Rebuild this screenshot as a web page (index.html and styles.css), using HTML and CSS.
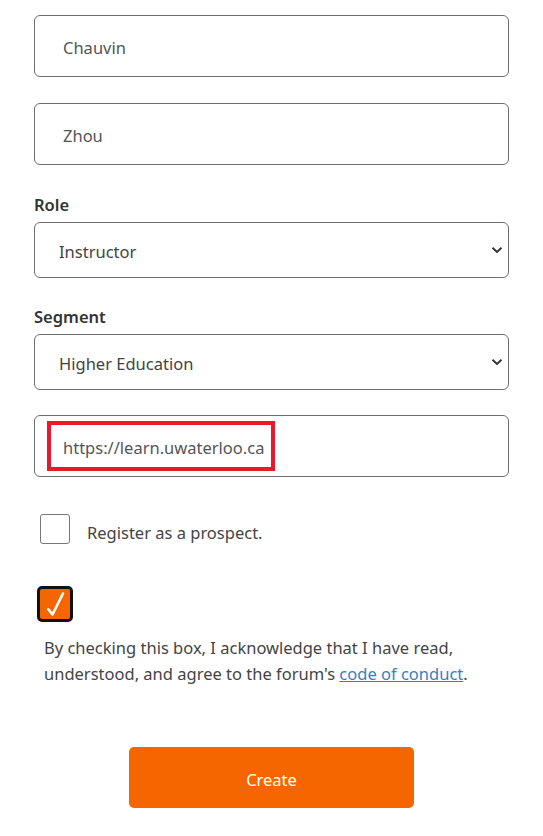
FILE: index.html
```html
<!DOCTYPE html>
<html lang="en">
<head>
<meta charset="utf-8">
<title>Create account</title>
<link rel="stylesheet" href="styles.css">
</head>
<body>
<form class="form">
  <div class="field first"><input class="text-input" type="text" value="Chauvin"></div>
  <div class="field"><input class="text-input" type="text" value="Zhou"></div>

  <label class="label">Role</label>
  <div class="select-wrap">
    <select class="select"><option>Instructor</option></select>
    <svg class="chevron" width="12" height="8" viewBox="0 0 12 8"><path d="M1.5 1.8 L6 6 L10.5 1.8" fill="none" stroke="#333" stroke-width="2"/></svg>
  </div>

  <label class="label">Segment</label>
  <div class="select-wrap">
    <select class="select"><option>Higher Education</option></select>
    <svg class="chevron" width="12" height="8" viewBox="0 0 12 8"><path d="M1.5 1.8 L6 6 L10.5 1.8" fill="none" stroke="#333" stroke-width="2"/></svg>
  </div>

  <div class="field url">
    <input class="text-input" type="text" value="https://learn.uwaterloo.ca">
    <span class="highlight"></span>
  </div>

  <div class="check-row">
    <span class="box"></span>
    <span class="check-text">Register as a prospect.</span>
  </div>

  <div class="checked">
    <svg width="30" height="30" viewBox="0 0 30 30"><path d="M8.3 20.3 L12.5 25.5 L23 4.5" fill="none" stroke="#fff" stroke-width="2.6" stroke-linecap="round" stroke-linejoin="round"/></svg>
  </div>

  <p class="terms">By checking this box, I acknowledge that I have read, understood, and agree to the forum's <a href="#" class="link">code of conduct</a>.</p>

  <div class="actions"><button type="button" class="btn">Create</button></div>
</form>
</body>
</html>
```

FILE: styles.css
```css
* { box-sizing: border-box; }
html, body { margin: 0; padding: 0; background: #fff; }
body { font-family: "Noto Sans", "Open Sans", sans-serif; color: #333; }

.form { padding: 0 34px; width: 543px; }

.field { position: relative; margin-top: 26px; }
.field.first { margin-top: 15px; }
.field.url { margin-top: 25px; }

.text-input {
  display: block;
  width: 100%;
  height: 62px;
  border: 1px solid #6e6e6e;
  border-radius: 6px;
  padding: 3px 0 0 28px;
  font-family: inherit;
  font-size: 16.5px;
  color: #555;
  background: #fff;
  outline: none;
}

.label {
  display: block;
  margin-top: 28px;
  height: 24px;
  line-height: 24px;
  font-size: 16.5px;
  font-weight: 600;
  color: #333;
}
.select-wrap + .label { margin-top: 27px; }

.select-wrap { position: relative; margin-top: 5px; }
.select {
  display: block;
  width: 100%;
  height: 56px;
  border: 1px solid #6e6e6e;
  border-radius: 6px;
  padding: 2px 0 0 24px;
  font-family: inherit;
  font-size: 16.5px;
  color: #444;
  background: #fff;
  -webkit-appearance: none;
  appearance: none;
  outline: none;
}
.chevron { position: absolute; right: 6px; top: 24px; pointer-events: none; }

.highlight {
  position: absolute;
  left: 13px;
  top: 6px;
  width: 228px;
  height: 50px;
  border: 4px solid #e8192c;
  pointer-events: none;
}

.check-row { display: flex; align-items: center; margin-top: 37px; padding-left: 6px; }
.box {
  width: 30px; height: 30px;
  border: 1px solid #777;
  border-radius: 3px;
  background: #fff;
  flex: none;
}
.check-text { margin-left: 17px; font-size: 16.5px; color: #444; position: relative; top: 3px; }

.checked {
  margin-top: 42px;
  margin-left: 3px;
  width: 36px; height: 36px;
  border: 3px solid #111;
  border-radius: 5px;
  background: #f56600;
}
.checked svg { display: block; }

.terms {
  margin: 13px 0 0 0;
  padding: 0 10px;
  font-size: 16.5px;
  line-height: 26px;
  color: #444;
}
.link { color: #3a7dbf; text-decoration: underline; }

.actions { display: flex; justify-content: center; margin-top: 60px; padding-bottom: 30px; }
.btn {
  width: 285px;
  height: 61px;
  border: none;
  border-radius: 5px;
  background: #f56600;
  color: #fff;
  font-family: inherit;
  font-size: 16.5px;
  padding-top: 5px;
}
```
